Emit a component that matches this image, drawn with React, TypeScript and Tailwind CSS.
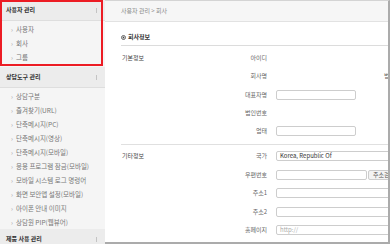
import { ReactNode } from "react";

type MenuGroup = {
    title: string;
    items: string[];
    active?: boolean;
};

const groups: MenuGroup[] = [
    { title: "사용자 관리", items: ["사용자", "회사", "그룹"], active: true },
    {
        title: "상담도구 관리",
        items: [
            "상담구분",
            "즐겨찾기(URL)",
            "단축메시지(PC)",
            "단축메시지(영상)",
            "단축메시지(모바일)",
            "응용 프로그램 잠금(모바일)",
            "모바일 시스템 로그 명령어",
            "화면 보안앱 설정(모바일)",
            "아이폰 안내 이미지",
            "상담원 PIP(웹뷰어)",
        ],
    },
    { title: "제품 사용 관리", items: [] },
];

const SideGroup = ({ group, className = "" }: { group: MenuGroup; className?: string }) => (
    <div className={`relative ${className}`}>
        <div className="h-[21px] px-[6px] flex items-center justify-between bg-[#ececec] border-b border-[#dedede]">
            <span className="font-bold text-[#333]">{group.title}</span>
            <span className="w-px h-[5px] bg-[#c4c4c4] mr-[2px]"></span>
        </div>
        {group.items.length > 0 && (
            <ul className={`pt-[1px] ${group.active ? "pb-[2px]" : ""}`}>
                {group.items.map((item) => (
                    <li key={item} className="h-[14px] pl-[11px] flex items-center gap-[3px] text-[6.5px] text-[#777]">
                        <span className="text-[#a0a0a0]">›</span>
                        <span>{item}</span>
                    </li>
                ))}
            </ul>
        )}
        {group.active && (
            <div className="absolute inset-0 right-[2px] border-2 border-[#ec1c24] pointer-events-none"></div>
        )}
    </div>
);

const Field = ({ children, className = "w-[80px]" }: { children?: ReactNode; className?: string }) => (
    <div
        className={`${className} h-[10px] px-[3px] flex items-center shrink-0 bg-white border border-[#cdcdcd] rounded-[2px]`}
    >
        {children}
    </div>
);

const Row = ({ label, h, children }: { label: string; h: string; children?: ReactNode }) => (
    <div className={`${h} flex items-center`}>
        <div className="w-[87px] shrink-0 pr-[1px] text-right text-[#666]">{label}</div>
        <div className="pl-[8px] flex items-center">{children}</div>
    </div>
);

export default function App() {
    return (
        <div className="w-[390px] h-[244px] overflow-hidden flex bg-white text-[6px] leading-none font-['Noto_Sans_CJK_KR','Liberation_Sans',sans-serif]">
            <aside className="w-[105px] shrink-0 bg-[#f5f5f5] flex flex-col">
                {groups.map((g, i) => (
                    <SideGroup key={g.title} group={g} className={i === 1 ? "mt-[1px]" : ""} />
                ))}
            </aside>

            <main className="flex-1 min-w-0 flex flex-col overflow-hidden border-t border-t-[#d4d4d4] border-r-2 border-r-[#ababab] border-b-2 border-b-[#ababab]">
                <div className="h-[21px] shrink-0 pl-[16px] flex items-center bg-[#f6f6f6] border-b border-[#e2e2e2] text-[#888]">
                    사용자 관리 &gt; 회사
                </div>

                <div className="pl-[16px] w-[420px]">
                    <div className="mt-[8px] h-[16px] flex items-center gap-[2px] border-b border-[#dcdcdc] pb-[1px]">
                        <svg width="5" height="5" viewBox="0 0 10 10">
                            <circle cx="5" cy="5" r="4" fill="none" stroke="#444" strokeWidth="1.6" />
                            <circle cx="5" cy="5" r="1.8" fill="#444" />
                        </svg>
                        <span className="font-bold text-[#333]">회사정보</span>
                    </div>

                    <div className="flex pt-[3px] pb-[4px] border-b border-[#e0e0e0]">
                        <div className="w-[60px] shrink-0 pl-[1px] h-[18.25px] flex items-center text-[#444]">기본정보</div>
                        <div className="flex flex-col">
                            <Row label="아이디" h="h-[18.25px]" />
                            <Row label="회사명" h="h-[18.25px]">
                                <span className="ml-[108px] text-[#666]">법인명</span>
                            </Row>
                            <Row label="대표자명" h="h-[18.25px]">
                                <Field />
                            </Row>
                            <Row label="법인번호" h="h-[18.25px]" />
                            <Row label="업태" h="h-[18.25px]">
                                <Field />
                            </Row>
                        </div>
                    </div>

                    <div className="flex pt-[1.5px]">
                        <div className="w-[60px] shrink-0 pl-[1px] h-[18.5px] flex items-center text-[#444]">기타정보</div>
                        <div className="flex flex-col">
                            <Row label="국가" h="h-[18.5px]">
                                <Field className="w-[140px]">
                                    <span className="text-[#333]">Korea, Republic Of</span>
                                </Field>
                            </Row>
                            <Row label="우편번호" h="h-[18.5px]">
                                <Field className="w-[91px]" />
                                <button className="ml-[1px] h-[10px] px-[4px] flex items-center bg-[#f3f3f3] border border-[#cdcdcd] rounded-[2px] text-[#555]">
                                    주소검색
                                </button>
                            </Row>
                            <Row label="주소1" h="h-[18.5px]">
                                <Field className="w-[140px]" />
                            </Row>
                            <Row label="주소2" h="h-[18.5px]">
                                <Field className="w-[140px]" />
                            </Row>
                            <Row label="홈페이지" h="h-[18.5px]">
                                <Field className="w-[140px]">
                                    <span className="text-[#aaa]">http://</span>
                                </Field>
                            </Row>
                        </div>
                    </div>
                </div>
            </main>
        </div>
    );
}
